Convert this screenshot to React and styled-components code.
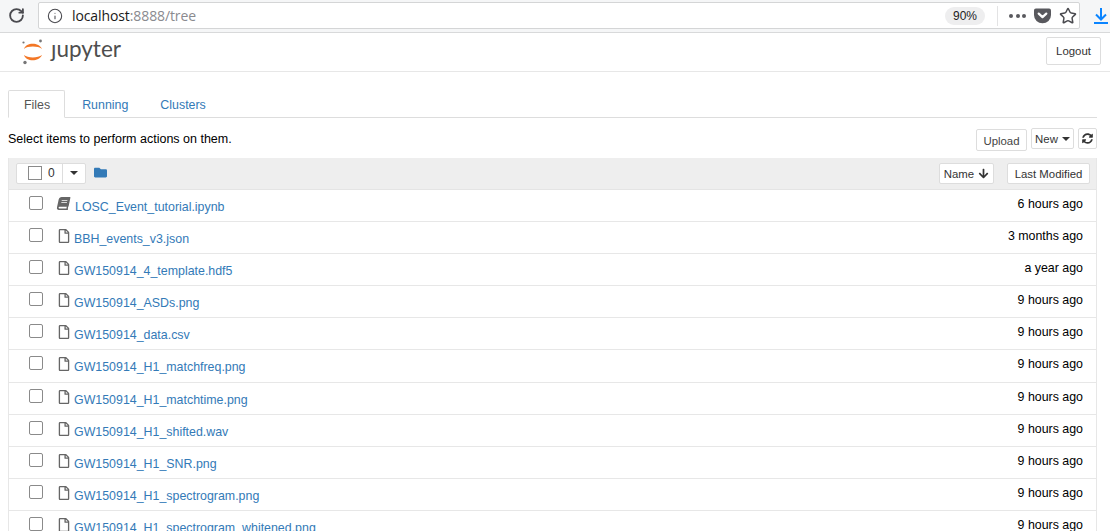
import styled, { createGlobalStyle } from "styled-components";
import { RotateCw, Info, Star } from "lucide-react";
import { FaRegFile, FaBook, FaFolder, FaArrowDown, FaSyncAlt } from "react-icons/fa";

const GlobalStyle = createGlobalStyle`
  html, body {
    margin: 0;
    height: 531px;
    overflow: hidden;
    background: #fff;
    font-family: "Liberation Sans", Arial, sans-serif;
    font-size: 12.4px;
    color: #000;
  }
  * { box-sizing: border-box; }
`;

const BrowserBar = styled.div`
  height: 33px;
  display: flex;
  align-items: flex-start;
  background: #f5f6f7;
  border-bottom: 1px solid #d8d9da;
`;

const ReloadSlot = styled.div`
  width: 38px;
  height: 32px;
  padding: 7px 0 0 8px;
  color: #4a4a4f;
`;

const AddressBar = styled.div`
  width: 1042px;
  height: 27px;
  margin-top: 2px;
  display: flex;
  align-items: center;
  background: #fff;
  border: 1px solid #d4d5d6;
  border-radius: 2px;
  padding: 0 2px 0 8px;
  color: #4a4a4f;
`;

const Url = styled.div`
  margin-left: 9px;
  font-family: "Open Sans", sans-serif;
  font-size: 14px;
  color: #8a8a8f;
  flex: 1;
  letter-spacing: -0.1px;
`;

const Host = styled.span`
  color: #1a1a1a;
`;

const ZoomPill = styled.div`
  width: 40px;
  height: 18px;
  border-radius: 9px;
  background: #eeeeef;
  font-size: 12px;
  color: #222;
  display: flex;
  align-items: center;
  justify-content: center;
`;

const Separator = styled.div`
  width: 1px;
  height: 20px;
  background: #e3e3e4;
  margin: 0 11px 0 12px;
`;

const Dots = styled.div`
  display: flex;
  gap: 2.5px;
  margin-right: 8px;
`;

const Dot = styled.i`
  width: 4px;
  height: 4px;
  border-radius: 50%;
  background: #59595e;
`;

const StarSlot = styled.span`
  display: flex;
  margin-left: 8px;
`;

const DownloadSlot = styled.div`
  margin: 8px 0 0 14px;
  color: #0a84ff;
`;

const SiteHeader = styled.header`
  height: 39px;
  display: flex;
  align-items: center;
  justify-content: space-between;
  border-bottom: 1px solid #e7e7e7;
  padding: 0 9px 0 21px;
`;

const Logo = styled.div`
  display: flex;
  align-items: center;
  gap: 7px;
  margin-top: -2px;
`;

const LogoWord = styled.span`
  margin-top: -4px;
  font-family: "Lato", sans-serif;
  font-size: 22.5px;
  line-height: 24px;
  color: #4e4e4e;
`;

const Button = styled.button`
  display: inline-flex;
  align-items: center;
  justify-content: center;
  gap: 4px;
  height: ${(p) => p.$h || 21}px;
  width: ${(p) => p.$w}px;
  padding: 0;
  background: #fff;
  border: 1px solid #ddd;
  border-radius: 2px;
  font-family: inherit;
  font-size: 11.4px;
  color: #333;
`;

const LogoutButton = styled(Button)`
  margin-top: -2px;
`;

const Main = styled.main`
  width: 1089px;
  margin-left: 8px;
  padding-top: 18px;
`;

const Tabs = styled.ul`
  display: flex;
  gap: 2px;
  margin: 0;
  padding: 0;
  height: 28px;
  list-style: none;
  border-bottom: 1px solid #ddd;
`;

const Tab = styled.li`
  height: 28px;
  padding: 7px ${(p) => (p.$active ? 14 : 15)}px 0 15px;
  border: 1px solid ${(p) => (p.$active ? "#ddd" : "transparent")};
  border-bottom-color: ${(p) => (p.$active ? "#fff" : "transparent")};
  border-radius: 2px 2px 0 0;
  margin: 0 ${(p) => (p.$active ? 0 : "-1px")};
  background: ${(p) => (p.$active ? "#fff" : "transparent")};
  color: ${(p) => (p.$active ? "#555" : "#337ab7")};
`;

const ActionRow = styled.div`
  height: 40px;
  display: flex;
  align-items: flex-start;
  justify-content: space-between;
  padding-top: 10px;
`;

const Hint = styled.div`
  margin-top: 4px;
  font-size: 12.5px;
`;

const Actions = styled.div`
  display: flex;
  gap: 4px;
`;

const UploadButton = styled(Button)`
  margin-top: 1px;
  padding-top: 2px;
  color: #444;
`;

const Caret = styled.i`
  width: 0;
  height: 0;
  border-top: 4px solid #333;
  border-left: 4px solid transparent;
  border-right: 4px solid transparent;
`;

const List = styled.section`
  border: 1px solid #e7e7e7;
  border-top: 0;
`;

const ListHeader = styled.div`
  height: 31.9px;
  display: flex;
  align-items: center;
  justify-content: space-between;
  background: #eee;
  padding: 0 6px 0 7px;
  border-bottom: 1px solid #e4e4e4;
`;

const HeaderLeft = styled.div`
  display: flex;
  align-items: center;
  gap: 8px;
`;

const HeaderRight = styled.div`
  display: flex;
  align-items: center;
  gap: 13px;
  margin-top: 1px;
`;

const SelectGroup = styled.div`
  width: 70px;
  height: 21px;
  display: flex;
  background: #fff;
  border: 1px solid #ddd;
  border-radius: 2px;
  font-size: 12px;
  color: #333;
`;

const SelectCount = styled.div`
  width: 46px;
  display: flex;
  align-items: center;
  padding-left: 11px;
  gap: 6px;
  border-right: 1px solid #ddd;
`;

const SelectMenu = styled.div`
  flex: 1;
  display: flex;
  align-items: center;
  justify-content: center;
`;

const Checkbox = styled.span`
  display: block;
  flex: none;
  width: 14px;
  height: 14px;
  border: 1px solid #8a8a8a;
  border-radius: ${(p) => (p.$square ? 0 : "2px")};
  background: #fff;
`;

const FolderLink = styled.span`
  display: flex;
  color: #337ab7;
  margin-top: -2px;
`;

const Row = styled.div`
  height: 32.11px;
  display: flex;
  align-items: center;
  padding: 0 13px 0 20px;
  border-bottom: 1px solid #e7e7e7;
`;

const RowCheck = styled.div`
  width: 28px;
  margin-bottom: 5px;
`;

const FileIcon = styled.span`
  display: flex;
  width: ${(p) => (p.$notebook ? 18 : 17)}px;
  margin-bottom: 3px;
  color: #666;
  transform: ${(p) => (p.$notebook ? "skewX(-12deg)" : "none")};
`;

const FileName = styled.a`
  flex: 1;
  padding-top: 3px;
  color: #337ab7;
`;

const Modified = styled.div`
  padding-bottom: 3px;
`;

const files = [
  ["LOSC_Event_tutorial.ipynb", "6 hours ago", true],
  ["BBH_events_v3.json", "3 months ago"],
  ["GW150914_4_template.hdf5", "a year ago"],
  ["GW150914_ASDs.png", "9 hours ago"],
  ["GW150914_data.csv", "9 hours ago"],
  ["GW150914_H1_matchfreq.png", "9 hours ago"],
  ["GW150914_H1_matchtime.png", "9 hours ago"],
  ["GW150914_H1_shifted.wav", "9 hours ago"],
  ["GW150914_H1_SNR.png", "9 hours ago"],
  ["GW150914_H1_spectrogram.png", "9 hours ago"],
  ["GW150914_H1_spectrogram_whitened.png", "9 hours ago"],
];

const JupyterMark = () => (
  <svg width="23" height="27" viewBox="0 0 23 27">
    <path d="M3 11C5 4 18 4 21 11C17 7.8 6.5 7.8 3 11Z" fill="#f37726" />
    <path d="M3 17C6.5 20.2 17 20.2 21 17C18 24 5 24 3 17Z" fill="#f37726" />
    <circle cx="19.5" cy="3" r="1.4" fill="#767677" />
    <circle cx="2.5" cy="4.5" r="1.1" fill="#767677" />
    <circle cx="4" cy="24.5" r="1.7" fill="#767677" />
  </svg>
);

const PocketIcon = () => (
  <svg width="17" height="16" viewBox="0 0 18 16">
    <path
      d="M2 0H16A2 2 0 0 1 18 2V7A9 8.8 0 0 1 0 7V2A2 2 0 0 1 2 0Z"
      fill="#59595e"
    />
    <path
      d="M5 5.5L9 9.2L13 5.5"
      fill="none"
      stroke="#fff"
      strokeWidth="2.4"
      strokeLinecap="round"
      strokeLinejoin="round"
    />
  </svg>
);

const DownloadIcon = () => (
  <svg width="14" height="16" viewBox="0 0 14 16">
    <path d="M7 0V11M2 6.5L7 11.5L12 6.5" fill="none" stroke="currentColor" strokeWidth="2" />
    <path d="M0 15H14" stroke="currentColor" strokeWidth="2" />
  </svg>
);

const App = () => {
  return (
    <>
      <GlobalStyle />
      <BrowserBar>
        <ReloadSlot>
          <RotateCw size={17} strokeWidth={2.6} />
        </ReloadSlot>
        <AddressBar>
          <Info size={16} strokeWidth={1.6} />
          <Url>
            <Host>localhost</Host>:8888/tree
          </Url>
          <ZoomPill>90%</ZoomPill>
          <Separator />
          <Dots>
            <Dot />
            <Dot />
            <Dot />
          </Dots>
          <PocketIcon />
          <StarSlot>
            <Star size={18} strokeWidth={2} />
          </StarSlot>
        </AddressBar>
        <DownloadSlot>
          <DownloadIcon />
        </DownloadSlot>
      </BrowserBar>

      <SiteHeader>
        <Logo>
          <JupyterMark />
          <LogoWord>ȷupyter</LogoWord>
        </Logo>
        <LogoutButton $w={55} $h={28}>
          Logout
        </LogoutButton>
      </SiteHeader>

      <Main>
        <Tabs>
          <Tab $active>Files</Tab>
          <Tab>Running</Tab>
          <Tab>Clusters</Tab>
        </Tabs>

        <ActionRow>
          <Hint>Select items to perform actions on them.</Hint>
          <Actions>
            <UploadButton $w={51} $h={22}>
              Upload
            </UploadButton>
            <Button $w={43}>
              New <Caret />
            </Button>
            <Button $w={19}>
              <FaSyncAlt size={11} />
            </Button>
          </Actions>
        </ActionRow>

        <List>
          <ListHeader>
            <HeaderLeft>
              <SelectGroup>
                <SelectCount>
                  <Checkbox $square />0
                </SelectCount>
                <SelectMenu>
                  <Caret />
                </SelectMenu>
              </SelectGroup>
              <FolderLink>
                <FaFolder size={13} />
              </FolderLink>
            </HeaderLeft>
            <HeaderRight>
              <Button $w={55}>
                Name <FaArrowDown size={11} />
              </Button>
              <Button $w={83}>Last Modified</Button>
            </HeaderRight>
          </ListHeader>

          {files.map(([name, time, notebook]) => (
            <Row key={name}>
              <RowCheck>
                <Checkbox />
              </RowCheck>
              <FileIcon $notebook={notebook}>
                {notebook ? <FaBook size={13} /> : <FaRegFile size={14} />}
              </FileIcon>
              <FileName>{name}</FileName>
              <Modified>{time}</Modified>
            </Row>
          ))}
        </List>
      </Main>
    </>
  );
};

export default App;
